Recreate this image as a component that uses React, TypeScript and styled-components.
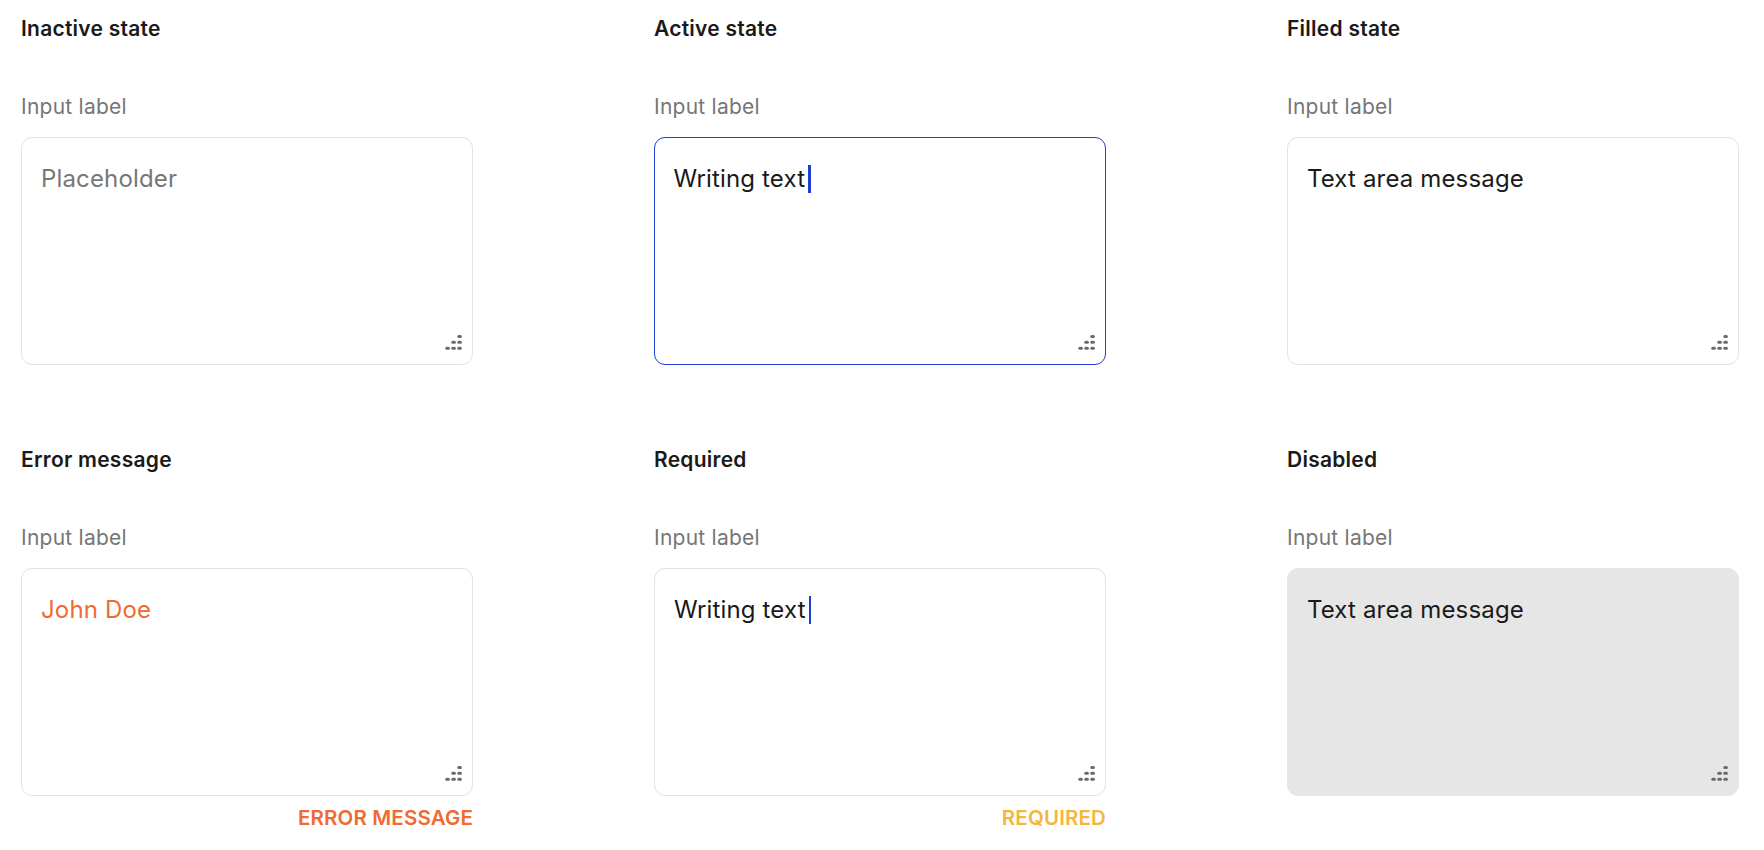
import React from "react";
import styled, { createGlobalStyle, css } from "styled-components";

const GlobalStyle = createGlobalStyle`
  html, body { margin: 0; padding: 0; background: #ffffff; }
  body { font-family: Inter, "Noto Sans", "Liberation Sans", sans-serif; color: #1a1a1a; }
  * { box-sizing: border-box; }
`;

type Variant = "inactive" | "active" | "filled" | "error" | "required" | "disabled";

const Page = styled.div`
  display: grid;
  grid-template-columns: repeat(3, 452px);
  column-gap: 181px;
  row-gap: 48px;
  padding: 16px 0 0 21px;
`;

const Cell = styled.section`
  display: flex;
  flex-direction: column;
`;

const Title = styled.h2`
  margin: 0;
  font-size: 21px;
  line-height: 25px;
  font-weight: 600;
  letter-spacing: 0.25px;
  color: #1a1a1a;
`;

const Label = styled.label`
  margin-top: 53px;
  font-size: 21px;
  line-height: 25px;
  font-weight: 400;
  letter-spacing: 0.25px;
  color: #767676;
`;

const Box = styled.div<{ $variant: Variant }>`
  position: relative;
  margin-top: 18px;
  height: 228px;
  border-radius: 11px;
  border: 1px solid #e2e2e2;
  background: #ffffff;
  padding: 25px 19px 23px;
  font-size: 24px;
  line-height: 32px;
  letter-spacing: 0.15px;
  color: #1a1a1a;
  ${(p) =>
    p.$variant === "active" &&
    css`
      border: 1.5px solid #2240cf;
      padding: 24.5px 18.5px 22.5px;
    `}
  ${(p) =>
    p.$variant === "disabled" &&
    css`
      background: #e6e6e6;
      border-color: #e6e6e6;
    `}
`;

const Value = styled.span<{ $tone: "text" | "placeholder" | "error" }>`
  color: ${(p) => (p.$tone === "placeholder" ? "#777777" : p.$tone === "error" ? "#f06a33" : "#1a1a1a")};
`;

const Caret = styled.span`
  display: inline-block;
  width: 2.5px;
  height: 28px;
  background: #1f3dcc;
  margin-left: 3px;
  vertical-align: -6px;
`;

const Grip = styled.svg`
  position: absolute;
  right: 10px;
  bottom: 14px;
  width: 17px;
  height: 15px;
`;

const Helper = styled.div<{ $tone: "error" | "required" }>`
  margin-top: 10px;
  min-height: 24px;
  text-align: right;
  font-size: 20.5px;
  line-height: 24px;
  font-weight: 600;
  letter-spacing: 0.15px;
  color: ${(p) => (p.$tone === "error" ? "#f06a33" : "#f5b63c")};
`;

const ResizeGrip = () => (
  <Grip viewBox="0 0 17 15" aria-hidden="true">
    <g fill="#6a6a6a">
      <rect x="12.3" y="0" width="4.6" height="3" rx="1.5" />
      <rect x="6.3" y="5.8" width="4.6" height="3" rx="1.5" />
      <rect x="12.3" y="5.8" width="4.6" height="3" rx="1.5" />
      <rect x="0.3" y="11.8" width="4.6" height="3" rx="1.5" />
      <rect x="6.3" y="11.8" width="4.6" height="3" rx="1.5" />
      <rect x="12.3" y="11.8" width="4.6" height="3" rx="1.5" />
    </g>
  </Grip>
);

type Item = {
  title: string;
  variant: Variant;
  text: string;
  tone: "text" | "placeholder" | "error";
  caret?: boolean;
  helper?: { text: string; tone: "error" | "required" };
};

const items: Item[] = [
  { title: "Inactive state", variant: "inactive", text: "Placeholder", tone: "placeholder" },
  { title: "Active state", variant: "active", text: "Writing text", tone: "text", caret: true },
  { title: "Filled state", variant: "filled", text: "Text area message", tone: "text" },
  {
    title: "Error message",
    variant: "error",
    text: "John Doe",
    tone: "error",
    helper: { text: "ERROR MESSAGE", tone: "error" },
  },
  {
    title: "Required",
    variant: "required",
    text: "Writing text",
    tone: "text",
    caret: true,
    helper: { text: "REQUIRED", tone: "required" },
  },
  { title: "Disabled", variant: "disabled", text: "Text area message", tone: "text" },
];

export default function App() {
  return (
    <>
      <GlobalStyle />
      <Page>
        {items.map((it) => (
          <Cell key={it.title}>
            <Title>{it.title}</Title>
            <Label>Input label</Label>
            <Box $variant={it.variant}>
              <Value $tone={it.tone}>{it.text}</Value>
              {it.caret && <Caret />}
              <ResizeGrip />
            </Box>
            {it.helper ? <Helper $tone={it.helper.tone}>{it.helper.text}</Helper> : <Helper $tone="error" />}
          </Cell>
        ))}
      </Page>
    </>
  );
}
